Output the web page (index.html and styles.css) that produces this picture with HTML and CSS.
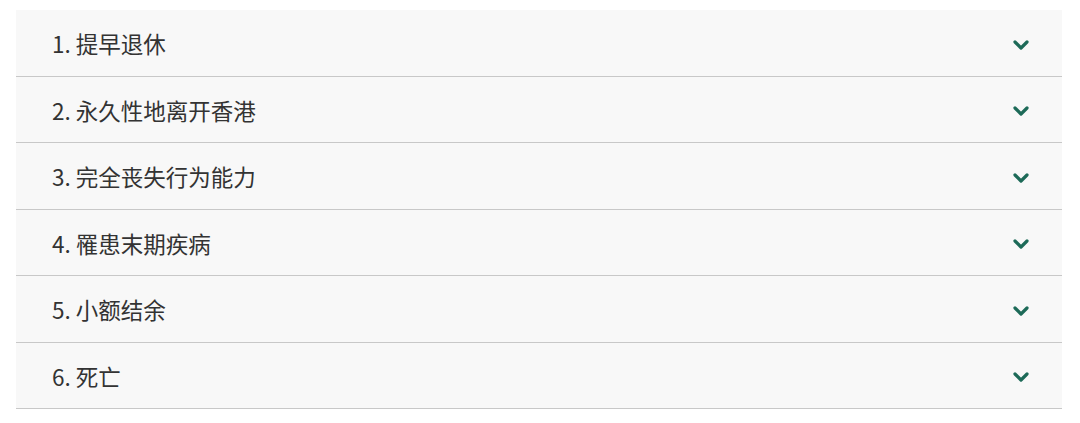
FILE: index.html
```html
<!DOCTYPE html>
<html lang="zh-CN">

<head>
    <meta charset="UTF-8" />
    <meta name="viewport" content="width=device-width, initial-scale=1.0" />
    <title>Accordion</title>
    <link rel="stylesheet" href="styles.css">
</head>

<body>
    <div class="accordion">
        <div class="acc_item">
            <span class="acc_title">1. 提早退休</span>
            <svg class="chevron" viewBox="0 0 16 10"><path d="M2 2 L8 8 L14 2" /></svg>
        </div>
        <div class="acc_item">
            <span class="acc_title">2. 永久性地离开香港</span>
            <svg class="chevron" viewBox="0 0 16 10"><path d="M2 2 L8 8 L14 2" /></svg>
        </div>
        <div class="acc_item">
            <span class="acc_title">3. 完全丧失行为能力</span>
            <svg class="chevron" viewBox="0 0 16 10"><path d="M2 2 L8 8 L14 2" /></svg>
        </div>
        <div class="acc_item">
            <span class="acc_title">4. 罹患末期疾病</span>
            <svg class="chevron" viewBox="0 0 16 10"><path d="M2 2 L8 8 L14 2" /></svg>
        </div>
        <div class="acc_item">
            <span class="acc_title">5. 小额结余</span>
            <svg class="chevron" viewBox="0 0 16 10"><path d="M2 2 L8 8 L14 2" /></svg>
        </div>
        <div class="acc_item">
            <span class="acc_title">6. 死亡</span>
            <svg class="chevron" viewBox="0 0 16 10"><path d="M2 2 L8 8 L14 2" /></svg>
        </div>
    </div>
</body>

</html>
```

FILE: styles.css
```css
body {
    margin: 0;
    padding: 10px 18px 0 16px;
    background-color: #fff;
    font-family: "Noto Sans CJK SC", "Noto Sans", sans-serif;
}

.accordion {
    background-color: #f8f8f8;
}

.acc_item {
    display: flex;
    justify-content: space-between;
    align-items: center;
    height: 64.5px;
    padding: 1px 33px 0 36px;
    border-bottom: 1px solid #c8c8c8;
}

.acc_title {
    font-size: 22.5px;
    color: #333;
}

.chevron {
    width: 16px;
    height: 10px;
    margin-top: 3px;
    fill: none;
    stroke: #1d6a58;
    stroke-width: 3.2;
    stroke-linecap: round;
    stroke-linejoin: round;
}
```
